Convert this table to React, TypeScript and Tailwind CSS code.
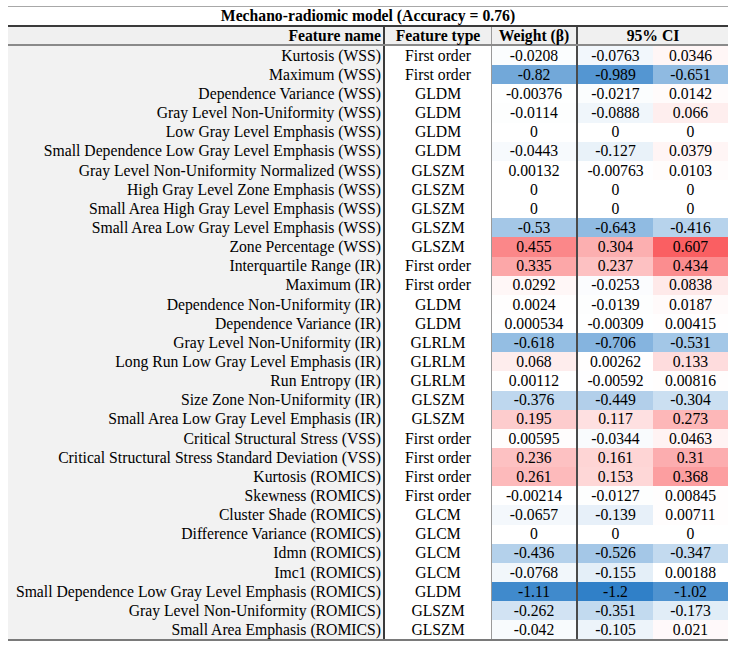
import React from "react";

const rows: [string, string, string, string, string][] = [
  ["Kurtosis (WSS)", "First order", "-0.0208", "-0.0763", "0.0346"],
  ["Maximum (WSS)", "First order", "-0.82", "-0.989", "-0.651"],
  ["Dependence Variance (WSS)", "GLDM", "-0.00376", "-0.0217", "0.0142"],
  ["Gray Level Non-Uniformity (WSS)", "GLDM", "-0.0114", "-0.0888", "0.066"],
  ["Low Gray Level Emphasis (WSS)", "GLDM", "0", "0", "0"],
  ["Small Dependence Low Gray Level Emphasis (WSS)", "GLDM", "-0.0443", "-0.127", "0.0379"],
  ["Gray Level Non-Uniformity Normalized (WSS)", "GLSZM", "0.00132", "-0.00763", "0.0103"],
  ["High Gray Level Zone Emphasis (WSS)", "GLSZM", "0", "0", "0"],
  ["Small Area High Gray Level Emphasis (WSS)", "GLSZM", "0", "0", "0"],
  ["Small Area Low Gray Level Emphasis (WSS)", "GLSZM", "-0.53", "-0.643", "-0.416"],
  ["Zone Percentage (WSS)", "GLSZM", "0.455", "0.304", "0.607"],
  ["Interquartile Range (IR)", "First order", "0.335", "0.237", "0.434"],
  ["Maximum (IR)", "First order", "0.0292", "-0.0253", "0.0838"],
  ["Dependence Non-Uniformity (IR)", "GLDM", "0.0024", "-0.0139", "0.0187"],
  ["Dependence Variance (IR)", "GLDM", "0.000534", "-0.00309", "0.00415"],
  ["Gray Level Non-Uniformity (IR)", "GLRLM", "-0.618", "-0.706", "-0.531"],
  ["Long Run Low Gray Level Emphasis (IR)", "GLRLM", "0.068", "0.00262", "0.133"],
  ["Run Entropy (IR)", "GLRLM", "0.00112", "-0.00592", "0.00816"],
  ["Size Zone Non-Uniformity (IR)", "GLSZM", "-0.376", "-0.449", "-0.304"],
  ["Small Area Low Gray Level Emphasis (IR)", "GLSZM", "0.195", "0.117", "0.273"],
  ["Critical Structural Stress (VSS)", "First order", "0.00595", "-0.0344", "0.0463"],
  ["Critical Structural Stress Standard Deviation (VSS)", "First order", "0.236", "0.161", "0.31"],
  ["Kurtosis (ROMICS)", "First order", "0.261", "0.153", "0.368"],
  ["Skewness (ROMICS)", "First order", "-0.00214", "-0.0127", "0.00845"],
  ["Cluster Shade (ROMICS)", "GLCM", "-0.0657", "-0.139", "0.00711"],
  ["Difference Variance (ROMICS)", "GLCM", "0", "0", "0"],
  ["Idmn (ROMICS)", "GLCM", "-0.436", "-0.526", "-0.347"],
  ["Imc1 (ROMICS)", "GLCM", "-0.0768", "-0.155", "0.00188"],
  ["Small Dependence Low Gray Level Emphasis (ROMICS)", "GLDM", "-1.11", "-1.2", "-1.02"],
  ["Gray Level Non-Uniformity (ROMICS)", "GLSZM", "-0.262", "-0.351", "-0.173"],
  ["Small Area Emphasis (ROMICS)", "GLSZM", "-0.042", "-0.105", "0.021"],
];

function scaleColor(s: string): string {
  const v = parseFloat(s);
  let c: [number, number, number];
  if (v < 0) {
    const t = Math.min(1, v / -1.2);
    c = [255 + (48 - 255) * t, 255 + (128 - 255) * t, 255 + (200 - 255) * t];
  } else {
    const t = Math.min(1, v / 0.607);
    c = [255 + (250 - 255) * t, 255 + (95 - 255) * t, 255 + (98 - 255) * t];
  }
  return `rgb(${Math.round(c[0])},${Math.round(c[1])},${Math.round(c[2])})`;
}

export default function App() {
  return (
    <div
      className="w-[733px] h-[647px] bg-white pt-[6px] pl-[8px] text-black"
      style={{ fontFamily: '"Liberation Serif", "Times New Roman", serif' }}
    >
      <div className="w-[720px] border-t border-[#a8a8a8] border-b-2 border-b-[#7a7a7a]">
        <div className="h-[20px] flex items-center justify-center font-bold text-[15.7px] leading-none border-b-2 border-[#3a3a3a]">
          Mechano-radiomic model (Accuracy = 0.76)
        </div>
        <div className="grid grid-cols-[377px_107px_86px_150px] h-[19px] bg-[#f0f0f0] border-b-2 border-[#8a8a8a] font-bold text-[15.7px] leading-none">
          <div className="flex items-center justify-end pr-[2px] border-r-2 border-[#3a3a3a]">Feature name</div>
          <div className="flex items-center justify-center border-r border-[#9a9a9a]">Feature type</div>
          <div className="flex items-center justify-center border-r-2 border-[#4a4a4a]">Weight (β)</div>
          <div className="flex items-center justify-center">95% CI</div>
        </div>
        <div className="grid grid-cols-[377px_107px_86px_75px_75px] auto-rows-[19.15px] text-[15.7px] leading-none">
          {rows.map((r, i) => (
            <React.Fragment key={i}>
              <div className="flex items-center justify-end pr-[2px] bg-[#f2f2f2] border-r-2 border-[#3a3a3a] whitespace-nowrap">
                {r[0]}
              </div>
              <div className="flex items-center justify-center bg-white border-r border-[#9a9a9a]">{r[1]}</div>
              <div
                className="flex items-center justify-center border-r-2 border-[#4a4a4a]"
                style={{ backgroundColor: scaleColor(r[2]) }}
              >
                {r[2]}
              </div>
              <div className="flex items-center justify-center" style={{ backgroundColor: scaleColor(r[3]) }}>
                {r[3]}
              </div>
              <div className="flex items-center justify-center" style={{ backgroundColor: scaleColor(r[4]) }}>
                {r[4]}
              </div>
            </React.Fragment>
          ))}
        </div>
      </div>
    </div>
  );
}
